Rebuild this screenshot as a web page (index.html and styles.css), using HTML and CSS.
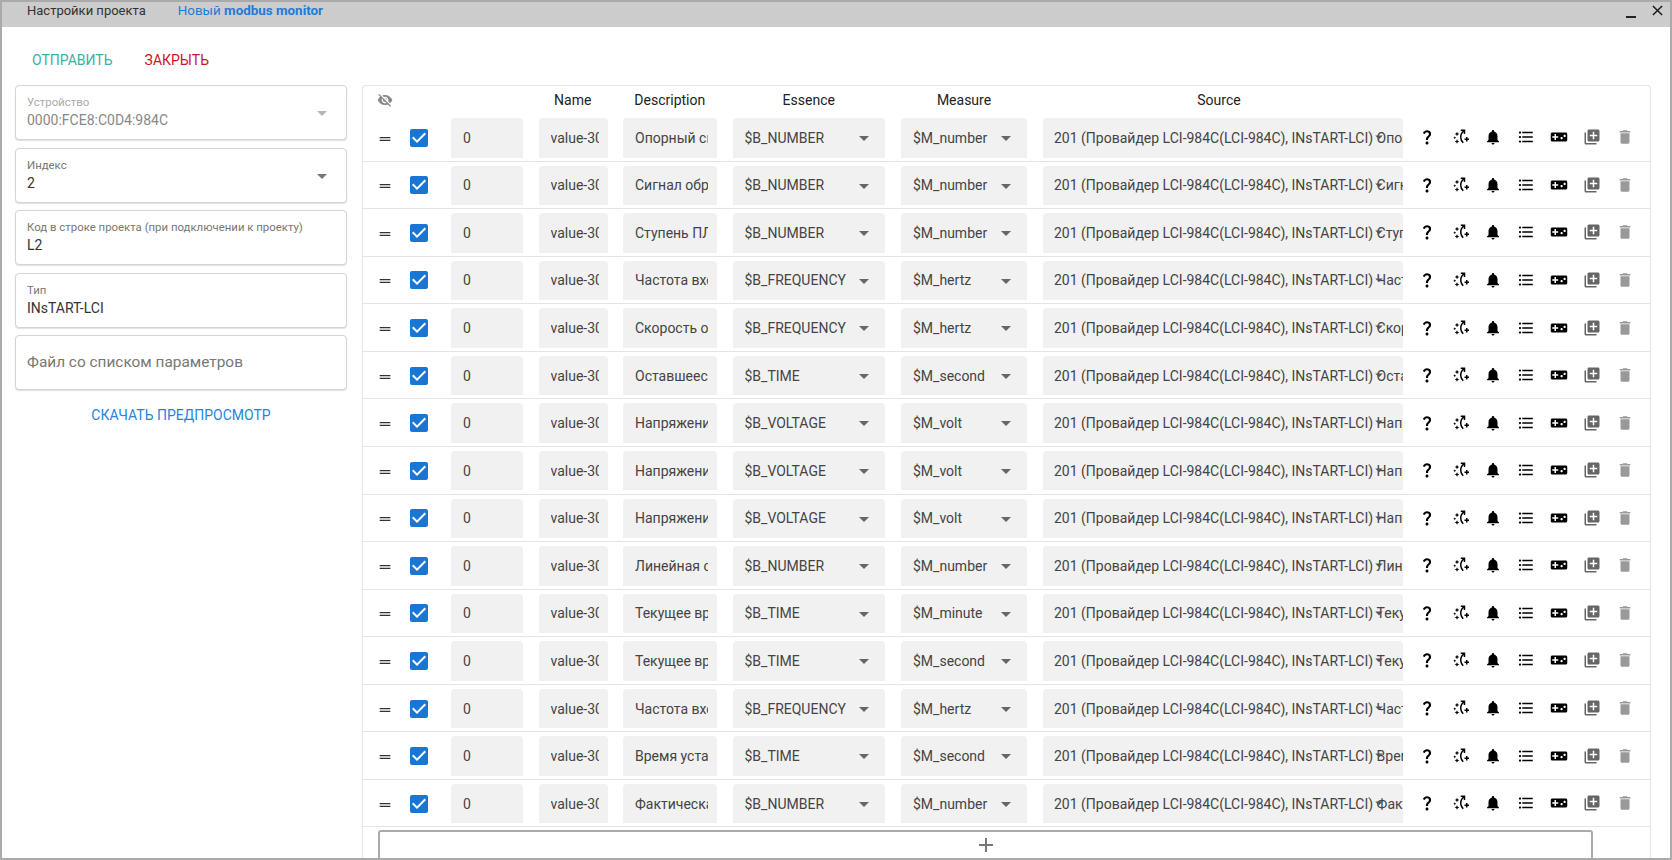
FILE: index.html
```html
<!DOCTYPE html>
<html lang="ru">
<head>
<meta charset="utf-8">
<title>Настройки проекта</title>
<link rel="stylesheet" href="styles.css">
</head>
<body>
<svg class="defs" aria-hidden="true">
<symbol id="i-drag" viewBox="0 0 24 24"><path d="M20 9H4v1.8h16V9zM4 15h16v-1.8H4V15z"/></symbol>
<symbol id="i-check" viewBox="0 0 24 24"><path d="M19 3H5c-1.11 0-2 .9-2 2v14c0 1.1.89 2 2 2h14c1.11 0 2-.9 2-2V5c0-1.1-.89-2-2-2zm-9 14l-5-5 1.41-1.41L10 14.17l7.59-7.59L19 8l-9 9z"/></symbol>
<symbol id="i-arrow" viewBox="0 0 24 24"><path d="M7 10l5 5 5-5z"/></symbol>
<symbol id="i-q" viewBox="0 0 24 24"><path d="M11.07 12.85c.77-1.39 2.25-2.21 3.11-3.44.91-1.29.4-3.7-2.18-3.7-1.69 0-2.52 1.28-2.87 2.34L6.54 6.96C7.25 4.83 9.18 3 11.99 3c2.35 0 3.96 1.07 4.78 2.41.7 1.15 1.11 3.3.03 4.9-1.2 1.77-2.35 2.31-2.97 3.45-.25.46-.35.76-.35 2.24h-2.89c-.01-.78-.13-2.05.48-3.15zM14 20c0 1.1-.9 2-2 2s-2-.9-2-2 .9-2 2-2 2 .9 2 2z"/></symbol>
<symbol id="i-switch" viewBox="0 0 24 24"><path d="M24 14h-2v-2h-2v2h-2v2h2v2h2v-2h2v-2zM7.06 8.94 5 8l2.06-.94L8 5l.94 2.06L11 8l-2.06.94L8 11l-.94-2.06zM8 21l.94-2.06L11 18l-2.06-.94L8 15l-.94 2.06L5 18l2.06.94L8 21zm-3.63-8.63L3 13l1.37.63L5 15l.63-1.37L7 13l-1.37-.63L5 11l-.63 1.37zM12 12c0-3.09 1.38-5.94 3.44-8H13V2h6v6h-2V5.28c-1.85 1.73-3 4.14-3 6.72 0 2.66 1.27 5.11 3.05 6.96L15.6 20.4C13.4 18.3 12 15.3 12 12z"/></symbol>
<symbol id="i-bell" viewBox="0 0 24 24"><path d="M12 22c1.1 0 2-.9 2-2h-4c0 1.1.89 2 2 2zm6-6v-5c0-3.07-1.64-5.64-4.5-6.32V4c0-.83-.67-1.5-1.5-1.5s-1.5.67-1.5 1.5v.68C7.63 5.36 6 7.92 6 11v5l-2 2v1h16v-1l-2-2z"/></symbol>
<symbol id="i-list" viewBox="0 0 24 24"><path d="M4 10.5c-.83 0-1.5.67-1.5 1.5s.67 1.5 1.5 1.5 1.5-.67 1.5-1.5-.67-1.5-1.5-1.5zm0-6c-.83 0-1.5.67-1.5 1.5S3.17 7.5 4 7.5 5.5 6.83 5.5 6 4.83 4.5 4 4.5zm0 12c-.83 0-1.5.68-1.5 1.5s.68 1.5 1.5 1.5 1.5-.68 1.5-1.5-.67-1.5-1.5-1.5zM7 19h14v-2H7v2zm0-6h14v-2H7v2zm0-8v2h14V5H7z"/></symbol>
<symbol id="i-game" viewBox="0 0 24 24"><path d="M21 6H3c-1.1 0-2 .9-2 2v8c0 1.1.9 2 2 2h18c1.1 0 2-.9 2-2V8c0-1.1-.9-2-2-2zm-10 7H8v3H6v-3H3v-2h3V8h2v3h3v2zm4.5 2c-.83 0-1.5-.67-1.5-1.5s.67-1.5 1.5-1.5 1.5.67 1.5 1.5-.67 1.5-1.5 1.5zm4-3c-.83 0-1.5-.67-1.5-1.5S18.67 9 19.5 9s1.5.67 1.5 1.5-.67 1.5-1.5 1.5z"/></symbol>
<symbol id="i-copy" viewBox="0 0 24 24"><path d="M4 6H2v14c0 1.1.9 2 2 2h14v-2H4V6zm16-4H8c-1.1 0-2 .9-2 2v12c0 1.1.9 2 2 2h12c1.1 0 2-.9 2-2V4c0-1.1-.9-2-2-2zm-1 9h-4v4h-2v-4H9V9h4V5h2v4h4v2z"/></symbol>
<symbol id="i-trash" viewBox="0 0 24 24"><path d="M6 19c0 1.1.9 2 2 2h8c1.1 0 2-.9 2-2V7H6v12zM19 4h-3.5l-1-1h-5l-1 1H5v2h14V4z"/></symbol>
<symbol id="i-eye" viewBox="0 0 24 24"><path d="M12 7c2.76 0 5 2.24 5 5 0 .65-.13 1.26-.36 1.83l2.92 2.92c1.51-1.26 2.7-2.89 3.43-4.75-1.73-4.39-6-7.5-11-7.5-1.4 0-2.74.25-3.98.7l2.16 2.16C10.74 7.13 11.35 7 12 7zM2 4.27l2.28 2.28.46.46C3.08 8.3 1.78 10.02 1 12c1.73 4.39 6 7.5 11 7.5 1.55 0 3.03-.3 4.38-.84l.42.42L19.73 22 21 20.73 3.27 3 2 4.27zM7.53 9.8l1.55 1.55c-.05.21-.08.43-.08.65 0 1.66 1.34 3 3 3 .22 0 .44-.03.65-.08l1.55 1.55c-.67.33-1.41.53-2.2.53-2.76 0-5-2.24-5-5 0-.79.2-1.53.53-2.2zm4.31-.78l3.15 3.15.02-.16c0-1.66-1.34-3-3-3l-.17.01z"/></symbol>
<symbol id="i-plus" viewBox="0 0 24 24"><path d="M19 13h-6v6h-2v-6H5v-2h6V5h2v6h6v2z"/></symbol>
</svg>
<div class="window">
  <header class="titlebar">
    <span class="tab">Настройки проекта</span>
    <span class="tab tab-active">Новый <b>modbus monitor</b></span>
    <span class="win-controls">
      <span class="win-min"></span>
      <svg class="win-close" viewBox="0 0 12 12"><path d="M1 1l10 10M11 1L1 11"/></svg>
    </span>
  </header>
  <div class="toolbar">
    <span class="btn btn-send">ОТПРАВИТЬ</span>
    <span class="btn btn-close">ЗАКРЫТЬ</span>
  </div>
  <main class="main">
    <aside class="side">
      <div class="field field-disabled"><label>Устройство</label><div class="value">0000:FCE8:C0D4:984C</div><svg class="field-arrow"><use href="#i-arrow"/></svg></div>
      <div class="field"><label>Индекс</label><div class="value">2</div><svg class="field-arrow"><use href="#i-arrow"/></svg></div>
      <div class="field"><label>Код в строке проекта (при подключении к проекту)</label><div class="value">L2</div></div>
      <div class="field"><label>Тип</label><div class="value">INsTART-LCI</div></div>
      <div class="field field-file">Файл со списком параметров</div>
      <div class="download">СКАЧАТЬ ПРЕДПРОСМОТР</div>
    </aside>
    <section class="panel">
      <div class="row row-head">
        <div class="cell-drag"><svg class="eye"><use href="#i-eye"/></svg></div>
        <div></div>
        <div></div>
        <div class="head">Name</div>
        <div class="head">Description</div>
        <div class="head">Essence</div>
        <div class="head">Measure</div>
        <div class="head head-source">Source</div>
        <div></div>
      </div>

      <div class="row"><div class="cell-drag"><svg class="drag"><use href="#i-drag"/></svg></div><div class="cell-check"><svg class="check"><use href="#i-check"/></svg></div><div class="cell"><div class="chip"><span>0</span></div></div><div class="cell cell-name"><div class="chip chip-name"><span>value-3001</span></div></div><div class="cell"><div class="chip chip-desc"><span>Опорный сигнал</span></div></div><div class="cell"><div class="chip chip-sel"><span>$B_NUMBER</span><svg class="arrow"><use href="#i-arrow"/></svg></div></div><div class="cell"><div class="chip chip-sel"><span>$M_number</span><svg class="arrow"><use href="#i-arrow"/></svg></div></div><div class="chip chip-src"><span>201 (Провайдер LCI-984C(LCI-984C), INsTART-LCI) Опорный сигнал</span><svg class="arrow-src"><use href="#i-arrow"/></svg></div><div class="actions"><svg><use href="#i-q"/></svg><svg><use href="#i-switch"/></svg><svg><use href="#i-bell"/></svg><svg><use href="#i-list"/></svg><svg><use href="#i-game"/></svg><svg class="muted"><use href="#i-copy"/></svg><svg class="faint"><use href="#i-trash"/></svg></div></div>

      <div class="row"><div class="cell-drag"><svg class="drag"><use href="#i-drag"/></svg></div><div class="cell-check"><svg class="check"><use href="#i-check"/></svg></div><div class="cell"><div class="chip"><span>0</span></div></div><div class="cell cell-name"><div class="chip chip-name"><span>value-3002</span></div></div><div class="cell"><div class="chip chip-desc"><span>Сигнал обратной связи</span></div></div><div class="cell"><div class="chip chip-sel"><span>$B_NUMBER</span><svg class="arrow"><use href="#i-arrow"/></svg></div></div><div class="cell"><div class="chip chip-sel"><span>$M_number</span><svg class="arrow"><use href="#i-arrow"/></svg></div></div><div class="chip chip-src"><span>201 (Провайдер LCI-984C(LCI-984C), INsTART-LCI) Сигнал обратной</span><svg class="arrow-src"><use href="#i-arrow"/></svg></div><div class="actions"><svg><use href="#i-q"/></svg><svg><use href="#i-switch"/></svg><svg><use href="#i-bell"/></svg><svg><use href="#i-list"/></svg><svg><use href="#i-game"/></svg><svg class="muted"><use href="#i-copy"/></svg><svg class="faint"><use href="#i-trash"/></svg></div></div>

      <div class="row"><div class="cell-drag"><svg class="drag"><use href="#i-drag"/></svg></div><div class="cell-check"><svg class="check"><use href="#i-check"/></svg></div><div class="cell"><div class="chip"><span>0</span></div></div><div class="cell cell-name"><div class="chip chip-name"><span>value-3003</span></div></div><div class="cell"><div class="chip chip-desc"><span>Ступень ПЛК</span></div></div><div class="cell"><div class="chip chip-sel"><span>$B_NUMBER</span><svg class="arrow"><use href="#i-arrow"/></svg></div></div><div class="cell"><div class="chip chip-sel"><span>$M_number</span><svg class="arrow"><use href="#i-arrow"/></svg></div></div><div class="chip chip-src"><span>201 (Провайдер LCI-984C(LCI-984C), INsTART-LCI) Ступень ПЛК</span><svg class="arrow-src"><use href="#i-arrow"/></svg></div><div class="actions"><svg><use href="#i-q"/></svg><svg><use href="#i-switch"/></svg><svg><use href="#i-bell"/></svg><svg><use href="#i-list"/></svg><svg><use href="#i-game"/></svg><svg class="muted"><use href="#i-copy"/></svg><svg class="faint"><use href="#i-trash"/></svg></div></div>

      <div class="row"><div class="cell-drag"><svg class="drag"><use href="#i-drag"/></svg></div><div class="cell-check"><svg class="check"><use href="#i-check"/></svg></div><div class="cell"><div class="chip"><span>0</span></div></div><div class="cell cell-name"><div class="chip chip-name"><span>value-3004</span></div></div><div class="cell"><div class="chip chip-desc"><span>Частота входная</span></div></div><div class="cell"><div class="chip chip-sel"><span>$B_FREQUENCY</span><svg class="arrow"><use href="#i-arrow"/></svg></div></div><div class="cell"><div class="chip chip-sel"><span>$M_hertz</span><svg class="arrow"><use href="#i-arrow"/></svg></div></div><div class="chip chip-src"><span>201 (Провайдер LCI-984C(LCI-984C), INsTART-LCI) Частота входная</span><svg class="arrow-src"><use href="#i-arrow"/></svg></div><div class="actions"><svg><use href="#i-q"/></svg><svg><use href="#i-switch"/></svg><svg><use href="#i-bell"/></svg><svg><use href="#i-list"/></svg><svg><use href="#i-game"/></svg><svg class="muted"><use href="#i-copy"/></svg><svg class="faint"><use href="#i-trash"/></svg></div></div>

      <div class="row"><div class="cell-drag"><svg class="drag"><use href="#i-drag"/></svg></div><div class="cell-check"><svg class="check"><use href="#i-check"/></svg></div><div class="cell"><div class="chip"><span>0</span></div></div><div class="cell cell-name"><div class="chip chip-name"><span>value-3005</span></div></div><div class="cell"><div class="chip chip-desc"><span>Скорость охлаждения</span></div></div><div class="cell"><div class="chip chip-sel"><span>$B_FREQUENCY</span><svg class="arrow"><use href="#i-arrow"/></svg></div></div><div class="cell"><div class="chip chip-sel"><span>$M_hertz</span><svg class="arrow"><use href="#i-arrow"/></svg></div></div><div class="chip chip-src"><span>201 (Провайдер LCI-984C(LCI-984C), INsTART-LCI) Скорость охлаждения</span><svg class="arrow-src"><use href="#i-arrow"/></svg></div><div class="actions"><svg><use href="#i-q"/></svg><svg><use href="#i-switch"/></svg><svg><use href="#i-bell"/></svg><svg><use href="#i-list"/></svg><svg><use href="#i-game"/></svg><svg class="muted"><use href="#i-copy"/></svg><svg class="faint"><use href="#i-trash"/></svg></div></div>

      <div class="row"><div class="cell-drag"><svg class="drag"><use href="#i-drag"/></svg></div><div class="cell-check"><svg class="check"><use href="#i-check"/></svg></div><div class="cell"><div class="chip"><span>0</span></div></div><div class="cell cell-name"><div class="chip chip-name"><span>value-3006</span></div></div><div class="cell"><div class="chip chip-desc"><span>Оставшееся время</span></div></div><div class="cell"><div class="chip chip-sel"><span>$B_TIME</span><svg class="arrow"><use href="#i-arrow"/></svg></div></div><div class="cell"><div class="chip chip-sel"><span>$M_second</span><svg class="arrow"><use href="#i-arrow"/></svg></div></div><div class="chip chip-src"><span>201 (Провайдер LCI-984C(LCI-984C), INsTART-LCI) Оставшееся время</span><svg class="arrow-src"><use href="#i-arrow"/></svg></div><div class="actions"><svg><use href="#i-q"/></svg><svg><use href="#i-switch"/></svg><svg><use href="#i-bell"/></svg><svg><use href="#i-list"/></svg><svg><use href="#i-game"/></svg><svg class="muted"><use href="#i-copy"/></svg><svg class="faint"><use href="#i-trash"/></svg></div></div>

      <div class="row"><div class="cell-drag"><svg class="drag"><use href="#i-drag"/></svg></div><div class="cell-check"><svg class="check"><use href="#i-check"/></svg></div><div class="cell"><div class="chip"><span>0</span></div></div><div class="cell cell-name"><div class="chip chip-name"><span>value-3007</span></div></div><div class="cell"><div class="chip chip-desc"><span>Напряжение фазы A</span></div></div><div class="cell"><div class="chip chip-sel"><span>$B_VOLTAGE</span><svg class="arrow"><use href="#i-arrow"/></svg></div></div><div class="cell"><div class="chip chip-sel"><span>$M_volt</span><svg class="arrow"><use href="#i-arrow"/></svg></div></div><div class="chip chip-src"><span>201 (Провайдер LCI-984C(LCI-984C), INsTART-LCI) Напряжение фазы A</span><svg class="arrow-src"><use href="#i-arrow"/></svg></div><div class="actions"><svg><use href="#i-q"/></svg><svg><use href="#i-switch"/></svg><svg><use href="#i-bell"/></svg><svg><use href="#i-list"/></svg><svg><use href="#i-game"/></svg><svg class="muted"><use href="#i-copy"/></svg><svg class="faint"><use href="#i-trash"/></svg></div></div>

      <div class="row"><div class="cell-drag"><svg class="drag"><use href="#i-drag"/></svg></div><div class="cell-check"><svg class="check"><use href="#i-check"/></svg></div><div class="cell"><div class="chip"><span>0</span></div></div><div class="cell cell-name"><div class="chip chip-name"><span>value-3008</span></div></div><div class="cell"><div class="chip chip-desc"><span>Напряжение фазы B</span></div></div><div class="cell"><div class="chip chip-sel"><span>$B_VOLTAGE</span><svg class="arrow"><use href="#i-arrow"/></svg></div></div><div class="cell"><div class="chip chip-sel"><span>$M_volt</span><svg class="arrow"><use href="#i-arrow"/></svg></div></div><div class="chip chip-src"><span>201 (Провайдер LCI-984C(LCI-984C), INsTART-LCI) Напряжение фазы B</span><svg class="arrow-src"><use href="#i-arrow"/></svg></div><div class="actions"><svg><use href="#i-q"/></svg><svg><use href="#i-switch"/></svg><svg><use href="#i-bell"/></svg><svg><use href="#i-list"/></svg><svg><use href="#i-game"/></svg><svg class="muted"><use href="#i-copy"/></svg><svg class="faint"><use href="#i-trash"/></svg></div></div>

      <div class="row"><div class="cell-drag"><svg class="drag"><use href="#i-drag"/></svg></div><div class="cell-check"><svg class="check"><use href="#i-check"/></svg></div><div class="cell"><div class="chip"><span>0</span></div></div><div class="cell cell-name"><div class="chip chip-name"><span>value-3009</span></div></div><div class="cell"><div class="chip chip-desc"><span>Напряжение фазы C</span></div></div><div class="cell"><div class="chip chip-sel"><span>$B_VOLTAGE</span><svg class="arrow"><use href="#i-arrow"/></svg></div></div><div class="cell"><div class="chip chip-sel"><span>$M_volt</span><svg class="arrow"><use href="#i-arrow"/></svg></div></div><div class="chip chip-src"><span>201 (Провайдер LCI-984C(LCI-984C), INsTART-LCI) Напряжение фазы C</span><svg class="arrow-src"><use href="#i-arrow"/></svg></div><div class="actions"><svg><use href="#i-q"/></svg><svg><use href="#i-switch"/></svg><svg><use href="#i-bell"/></svg><svg><use href="#i-list"/></svg><svg><use href="#i-game"/></svg><svg class="muted"><use href="#i-copy"/></svg><svg class="faint"><use href="#i-trash"/></svg></div></div>

      <div class="row"><div class="cell-drag"><svg class="drag"><use href="#i-drag"/></svg></div><div class="cell-check"><svg class="check"><use href="#i-check"/></svg></div><div class="cell"><div class="chip"><span>0</span></div></div><div class="cell cell-name"><div class="chip chip-name"><span>value-3010</span></div></div><div class="cell"><div class="chip chip-desc"><span>Линейная скорость</span></div></div><div class="cell"><div class="chip chip-sel"><span>$B_NUMBER</span><svg class="arrow"><use href="#i-arrow"/></svg></div></div><div class="cell"><div class="chip chip-sel"><span>$M_number</span><svg class="arrow"><use href="#i-arrow"/></svg></div></div><div class="chip chip-src"><span>201 (Провайдер LCI-984C(LCI-984C), INsTART-LCI) Линейная скорость</span><svg class="arrow-src"><use href="#i-arrow"/></svg></div><div class="actions"><svg><use href="#i-q"/></svg><svg><use href="#i-switch"/></svg><svg><use href="#i-bell"/></svg><svg><use href="#i-list"/></svg><svg><use href="#i-game"/></svg><svg class="muted"><use href="#i-copy"/></svg><svg class="faint"><use href="#i-trash"/></svg></div></div>

      <div class="row"><div class="cell-drag"><svg class="drag"><use href="#i-drag"/></svg></div><div class="cell-check"><svg class="check"><use href="#i-check"/></svg></div><div class="cell"><div class="chip"><span>0</span></div></div><div class="cell cell-name"><div class="chip chip-name"><span>value-3011</span></div></div><div class="cell"><div class="chip chip-desc"><span>Текущее время</span></div></div><div class="cell"><div class="chip chip-sel"><span>$B_TIME</span><svg class="arrow"><use href="#i-arrow"/></svg></div></div><div class="cell"><div class="chip chip-sel"><span>$M_minute</span><svg class="arrow"><use href="#i-arrow"/></svg></div></div><div class="chip chip-src"><span>201 (Провайдер LCI-984C(LCI-984C), INsTART-LCI) Текущее время</span><svg class="arrow-src"><use href="#i-arrow"/></svg></div><div class="actions"><svg><use href="#i-q"/></svg><svg><use href="#i-switch"/></svg><svg><use href="#i-bell"/></svg><svg><use href="#i-list"/></svg><svg><use href="#i-game"/></svg><svg class="muted"><use href="#i-copy"/></svg><svg class="faint"><use href="#i-trash"/></svg></div></div>

      <div class="row"><div class="cell-drag"><svg class="drag"><use href="#i-drag"/></svg></div><div class="cell-check"><svg class="check"><use href="#i-check"/></svg></div><div class="cell"><div class="chip"><span>0</span></div></div><div class="cell cell-name"><div class="chip chip-name"><span>value-3012</span></div></div><div class="cell"><div class="chip chip-desc"><span>Текущее время</span></div></div><div class="cell"><div class="chip chip-sel"><span>$B_TIME</span><svg class="arrow"><use href="#i-arrow"/></svg></div></div><div class="cell"><div class="chip chip-sel"><span>$M_second</span><svg class="arrow"><use href="#i-arrow"/></svg></div></div><div class="chip chip-src"><span>201 (Провайдер LCI-984C(LCI-984C), INsTART-LCI) Текущее время</span><svg class="arrow-src"><use href="#i-arrow"/></svg></div><div class="actions"><svg><use href="#i-q"/></svg><svg><use href="#i-switch"/></svg><svg><use href="#i-bell"/></svg><svg><use href="#i-list"/></svg><svg><use href="#i-game"/></svg><svg class="muted"><use href="#i-copy"/></svg><svg class="faint"><use href="#i-trash"/></svg></div></div>

      <div class="row"><div class="cell-drag"><svg class="drag"><use href="#i-drag"/></svg></div><div class="cell-check"><svg class="check"><use href="#i-check"/></svg></div><div class="cell"><div class="chip"><span>0</span></div></div><div class="cell cell-name"><div class="chip chip-name"><span>value-3013</span></div></div><div class="cell"><div class="chip chip-desc"><span>Частота входная</span></div></div><div class="cell"><div class="chip chip-sel"><span>$B_FREQUENCY</span><svg class="arrow"><use href="#i-arrow"/></svg></div></div><div class="cell"><div class="chip chip-sel"><span>$M_hertz</span><svg class="arrow"><use href="#i-arrow"/></svg></div></div><div class="chip chip-src"><span>201 (Провайдер LCI-984C(LCI-984C), INsTART-LCI) Частота входная</span><svg class="arrow-src"><use href="#i-arrow"/></svg></div><div class="actions"><svg><use href="#i-q"/></svg><svg><use href="#i-switch"/></svg><svg><use href="#i-bell"/></svg><svg><use href="#i-list"/></svg><svg><use href="#i-game"/></svg><svg class="muted"><use href="#i-copy"/></svg><svg class="faint"><use href="#i-trash"/></svg></div></div>

      <div class="row"><div class="cell-drag"><svg class="drag"><use href="#i-drag"/></svg></div><div class="cell-check"><svg class="check"><use href="#i-check"/></svg></div><div class="cell"><div class="chip"><span>0</span></div></div><div class="cell cell-name"><div class="chip chip-name"><span>value-3014</span></div></div><div class="cell"><div class="chip chip-desc"><span>Время установки</span></div></div><div class="cell"><div class="chip chip-sel"><span>$B_TIME</span><svg class="arrow"><use href="#i-arrow"/></svg></div></div><div class="cell"><div class="chip chip-sel"><span>$M_second</span><svg class="arrow"><use href="#i-arrow"/></svg></div></div><div class="chip chip-src"><span>201 (Провайдер LCI-984C(LCI-984C), INsTART-LCI) Время установки</span><svg class="arrow-src"><use href="#i-arrow"/></svg></div><div class="actions"><svg><use href="#i-q"/></svg><svg><use href="#i-switch"/></svg><svg><use href="#i-bell"/></svg><svg><use href="#i-list"/></svg><svg><use href="#i-game"/></svg><svg class="muted"><use href="#i-copy"/></svg><svg class="faint"><use href="#i-trash"/></svg></div></div>

      <div class="row"><div class="cell-drag"><svg class="drag"><use href="#i-drag"/></svg></div><div class="cell-check"><svg class="check"><use href="#i-check"/></svg></div><div class="cell"><div class="chip"><span>0</span></div></div><div class="cell cell-name"><div class="chip chip-name"><span>value-3015</span></div></div><div class="cell"><div class="chip chip-desc"><span>Фактическая частота</span></div></div><div class="cell"><div class="chip chip-sel"><span>$B_NUMBER</span><svg class="arrow"><use href="#i-arrow"/></svg></div></div><div class="cell"><div class="chip chip-sel"><span>$M_number</span><svg class="arrow"><use href="#i-arrow"/></svg></div></div><div class="chip chip-src"><span>201 (Провайдер LCI-984C(LCI-984C), INsTART-LCI) Фактическая частота</span><svg class="arrow-src"><use href="#i-arrow"/></svg></div><div class="actions"><svg><use href="#i-q"/></svg><svg><use href="#i-switch"/></svg><svg><use href="#i-bell"/></svg><svg><use href="#i-list"/></svg><svg><use href="#i-game"/></svg><svg class="muted"><use href="#i-copy"/></svg><svg class="faint"><use href="#i-trash"/></svg></div></div>

      <div class="add"><svg><use href="#i-plus"/></svg></div>
    </section>
  </main>
</div>
</body>
</html>
```
FILE: styles.css
```css
* { box-sizing: border-box; }
html, body { margin: 0; height: 100%; overflow: hidden; background: #fff; }
body { font-family: Roboto, "Liberation Sans", sans-serif; font-size: 14px; color: rgba(0,0,0,.8); }
.defs { display: none; }

.window {
  height: 860px;
  display: flex;
  flex-direction: column;
  border-left: 2px solid #aaa;
  border-right: 2px solid #aaa;
  border-bottom: 2px solid #aaa;
  overflow: hidden;
}

.titlebar {
  flex: none;
  height: 27px;
  background: #ccc;
  border-top: 2px solid #aaa;
  margin-left: -2px;
  margin-right: -2px;
  padding-left: 27px;
  display: flex;
  align-items: flex-start;
  gap: 32px;
  font-size: 13px;
  line-height: 18px;
  position: relative;
}
.tab { color: #333; }
.tab-active { color: #1f7bd8; font-size: 13.4px; }
.tab-active b { font-weight: 700; }
.win-controls { margin-left: auto; display: flex; align-items: flex-start; gap: 16px; padding-right: 9px; }
.win-min { width: 10px; height: 2px; background: #222; margin-top: 14px; }
.win-close { width: 11px; height: 11px; margin-top: 3px; fill: none; stroke: #1a1a1a; stroke-width: 1.6; }

.toolbar {
  flex: none;
  height: 58px;
  padding: 24px 0 0 30px;
  display: flex;
  gap: 32px;
  line-height: 18px;
}
.btn { font-size: 14px; }
.btn-send { color: #3ab0a6; }
.btn-close { color: #cf1322; }

.main {
  flex: 1;
  min-height: 0;
  display: flex;
  padding: 0 19px 0 13px;
  gap: 15px;
}
.side { flex: none; width: 332px; display: flex; flex-direction: column; gap: 7.5px; }
.field {
  position: relative;
  height: 55px;
  border: 1px solid #d4d4d4;
  border-radius: 4px;
  box-shadow: 0 1px 1px rgba(0,0,0,.12);
  padding: 8px 11px 0;
  background: #fff;
}
.field label { display: block; font-size: 11.4px; line-height: 16px; color: #777; }
.value { font-size: 14px; line-height: 20px; color: #333; }
.field-disabled label { color: #aaa; }
.field-disabled .value { color: #888; }
.field-arrow { position: absolute; right: 12px; top: 15px; width: 24px; height: 24px; fill: #777; }
.field-disabled .field-arrow { fill: #b5b5b5; }
.field-file { font-size: 15.4px; line-height: 20px; color: #777; padding-top: 16px; }
.download { margin-top: 7px; text-align: center; color: #2484e0; line-height: 20px; }

.panel {
  flex: 1;
  min-width: 0;
  border: 1px solid #e4e4e4;
  border-bottom: 0;
  border-radius: 4px 4px 0 0;
  overflow: hidden;
}
.row {
  height: 47.57px;
  display: grid;
  grid-template-columns: 44px 44px 87.5px 84.5px 109.5px 168.5px 142px 360px auto;
  align-items: center;
  border-bottom: 1px solid #e4e4e4;
}
.row-head { height: 28px; border-bottom: 0; }
.head { padding-right: 16px; text-align: center; color: #222; line-height: 20px; }
.head-source { padding-right: 8px; }
.cell-drag { display: flex; justify-content: center; align-items: center; }
.drag { width: 16px; height: 16px; fill: #333; margin-top: 3px; }
.eye { width: 16px; height: 16px; fill: #888; }
.cell-check { height: 24px; margin-top: 1px; }
.check { display: block; width: 24px; height: 24px; fill: #1976d2; background: linear-gradient(#fff,#fff) center/14px 14px no-repeat; }
.cell { padding-right: 16px; }
.cell-name { padding-right: 15px; }
.chip {
  position: relative;
  height: 39.5px;
  margin-top: 1px;
  background: #f1f1f1;
  border-radius: 4px 4px 0 0;
  padding: 0 12px;
  display: flex;
  align-items: center;
  color: #444;
  overflow: hidden;
}
.chip span { display: block; flex: 1; min-width: 0; overflow: hidden; white-space: nowrap; }
.chip-name { padding-right: 9px; }
.chip-desc { padding-right: 9px; }
.chip-sel { padding-right: 32px; }
.arrow { position: absolute; right: 9px; top: 8px; width: 24px; height: 24px; fill: #666; }
.chip-src { padding: 0 0 0 11px; }
.arrow-src { position: absolute; right: 15px; top: 10px; width: 18px; height: 18px; fill: #555; }
.actions { display: grid; grid-template-columns: repeat(7, 33px); padding-left: 7.5px; justify-items: center; align-items: center; }
.actions svg { width: 18px; height: 18px; fill: #000; }
.actions .muted { fill: #666; }
.actions .faint { fill: #999; }

.add {
  margin: 3px 0 0 15px;
  width: 1215px;
  height: 40px;
  border: 2px solid #aaa;
  border-radius: 3px;
  display: flex;
  justify-content: center;
  align-items: flex-start;
}
.add svg { width: 24px; height: 24px; fill: #777; margin-top: 1px; }
```
